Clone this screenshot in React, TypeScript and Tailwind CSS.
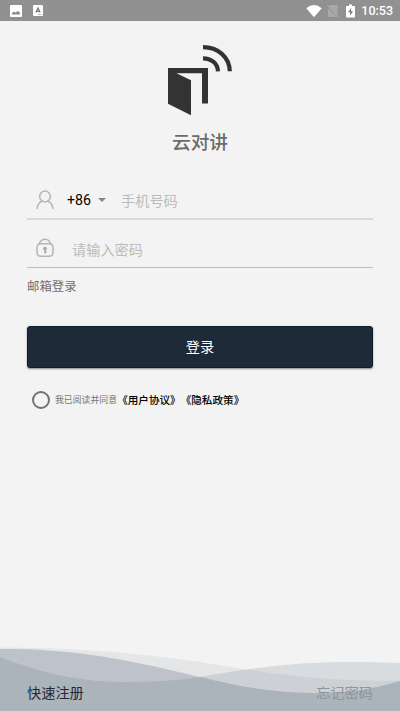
import React from "react";

const A = "M0 9 C60 8.5 110 15 200 37 C240 47 275 53 315 53 C350 53 375 49 400 41 V71 H0Z";
const B = "M0 17 C45 35 85 42 125 42 C150 42 175 41 200 37 C255 27 300 22 350 22 C370 22 390 22.5 400 23 V71 H0Z";
const C = "M0 7.5 C70 7.5 130 12 200 22 C260 31 300 41 400 41 V71 H0Z";

function StatusBar() {
  return (
    <header className="flex h-[21px] shrink-0 items-center bg-[#919191] pl-[10px] pr-[7px] text-white">
      <svg width="12" height="12" viewBox="0 0 12 12" className="mr-[11px]">
        <rect width="12" height="12" rx="1" fill="#fff" />
        <path d="M2 9.5V8l2-1.500 1.500 1L8 6l2 2v1.500z" fill="#8d8d8d" />
      </svg>
      <svg width="10" height="11" viewBox="0 0 10 11">
        <rect width="10" height="11" rx="1" fill="#fff" />
        <path d="M2.900 7.600 5 3l2.100 4.600M3.500 6.300h3" fill="none" stroke="#777" strokeWidth="1.200" />
        <path d="M5 9.500h3.500" stroke="#bbb" strokeWidth="1" />
      </svg>
      <div className="ml-auto flex items-center">
        <svg width="16" height="14" viewBox="0 0 17 14" className="mr-[5px]">
          <path d="M.3 4Q8.5-2.6 16.7 4L8.5 13.6z" fill="#fff" />
        </svg>
        <svg width="12" height="14" viewBox="0 0 12 14" className="mr-[7px]">
          <path d="M4 1h6.5v12H1V4z" fill="#a9a9a9" />
          <path d="M0 1.5 11.5 13" stroke="#919191" strokeWidth="2.2" />
          <path d="M.5.8 11.5 12.8" stroke="#bbb" strokeWidth="1" />
        </svg>
        <svg width="9" height="14" viewBox="0 0 9 14" className="mr-[6px]">
          <path d="M3 .5h3V2h2.2q.8 0 .8.8v9.9q0 .8-.8.8H.8q-.8 0-.8-.8V2.800Q0 2 .8 2H3z" fill="#fff" />
          <path d="M5.200 3.800 2.200 8.300h2v3.500L7 7.200H5z" fill="#777" />
        </svg>
        <span className="font-[Roboto,sans-serif] text-[12.500px] font-medium leading-[21px]">10:53</span>
      </div>
    </header>
  );
}

function Logo() {
  return (
    <svg width="66" height="72" viewBox="0 0 66 72" className="ml-[167px] mt-[23px] shrink-0">
      <path d="M1 24H41V59.500H35V29.200H9.500L24 36.200V71.200L1 59.800Z" fill="#333" />
      <g fill="none" stroke="#333" strokeWidth="4.200">
        <path d="M36 14.300C44 14.300 50.500 19 51 27.300" />
        <path d="M36 3.200C51 3.200 62.400 13 62.800 27.300" />
      </g>
    </svg>
  );
}

export default function App() {
  return (
    <main className="flex h-[711px] w-[400px] flex-col overflow-hidden bg-[#f3f3f3] font-['Noto_Sans_CJK_SC',sans-serif]">
      <StatusBar />
      <Logo />
      <h1 className="mb-px mt-[11px] h-[28px] text-center text-[18.700px] font-medium leading-[28px] text-[#6b6b6b]">云对讲</h1>

      <div className="mx-[27px] flex h-[64px] shrink-0 items-end border-b-2 border-[#d9d9d9]">
        <div className="flex h-[37px] items-center">
          <svg width="18" height="20" viewBox="0 0 18 20" className="ml-[9px] mr-[13px]" fill="none" stroke="#b5b5b5" strokeWidth="1.500">
            <circle cx="9" cy="6.500" r="5.400" />
            <path d="M6.200 11.200C2.800 12.500 1.300 15.500 1 19M11.800 11.200C15.200 12.500 16.700 15.500 17 19" />
          </svg>
          <span className="w-[31px] pt-[2px] font-[Roboto,sans-serif] text-[14.200px] text-black">+86</span>
          <svg width="8" height="4" viewBox="0 0 8 4" className="mr-[15px]">
            <path d="M0 0h8L4 4z" fill="#858585" />
          </svg>
          <span className="text-[14.200px] leading-5 text-[#bcbcbc]">手机号码</span>
        </div>
      </div>

      <div className="mx-[27px] flex h-[48px] shrink-0 items-center border-b border-[#bcbcbc] pt-[12px]">
        <svg width="18" height="20" viewBox="0 0 18 20" className="mb-[3px] ml-[9px] mr-[18px]" fill="none" stroke="#b5b5b5" strokeWidth="1.500">
          <path d="M3 6C4.500 2.500 6.200 1.200 9 1.200S13.500 2.500 15 6" />
          <path d="M5 5.700h8q4 0 4 4v4.600q0 4-4 4H5q-4 0-4-4V9.700q0-4 4-4z" />
          <circle cx="9" cy="10.600" r="1.900" fill="#aaa" stroke="none" />
          <path d="M9 11v4.500M9 13.800h1.600" stroke="#aaa" />
        </svg>
        <span className="mb-[2px] text-[14.200px] leading-5 text-[#bcbcbc]">请输入密码</span>
      </div>

      <div className="ml-[27px] mt-[8px] h-5 text-[12.400px] leading-5 text-[#6e6e6e]">邮箱登录</div>

      <button className="mx-[27px] mt-[30px] h-[42px] shrink-0 rounded-[3px] border border-[#101d2c] bg-[#1e2a37] pb-[2px] text-[14.200px] leading-5 text-white shadow-[0_1px_2px_rgba(0,0,0,0.450)]">
        登录
      </button>

      <div className="ml-[32px] mt-[22px] flex h-5 items-center whitespace-nowrap">
        <span className="mr-[5px] h-[18px] w-[18px] rounded-full border-2 border-[#727272]" />
        <span className="text-[8.900px] text-[#777]">我已阅读并同意</span>
        <span className="text-[10.600px] font-medium text-black">《用户协议》</span>
        <span className="text-[10.600px] font-medium text-black">《隐私政策》</span>
      </div>

      <footer className="relative mt-auto h-[71px] shrink-0">
        <svg width="400" height="71" viewBox="0 0 400 71" className="absolute inset-0">
          <clipPath id="low"><path d={C} /></clipPath>
          <clipPath id="mid"><path d={B} /></clipPath>
          <path d={C} fill="#e4e6e8" />
          <path d={B} fill="#d8dcde" />
          <path d={B} fill="#cdd1d5" clipPath="url(#low)" />
          <path d={A} fill="#bec3cb" />
          <path d={A} fill="#abb3bb" clipPath="url(#mid)" />
        </svg>
        <div className="relative flex justify-between px-[27px] pt-[42px] text-[14.200px] leading-5">
          <span className="text-[#1e2a37]">快速注册</span>
          <span className="text-[#8e959c]">忘记密码</span>
        </div>
      </footer>
    </main>
  );
}
